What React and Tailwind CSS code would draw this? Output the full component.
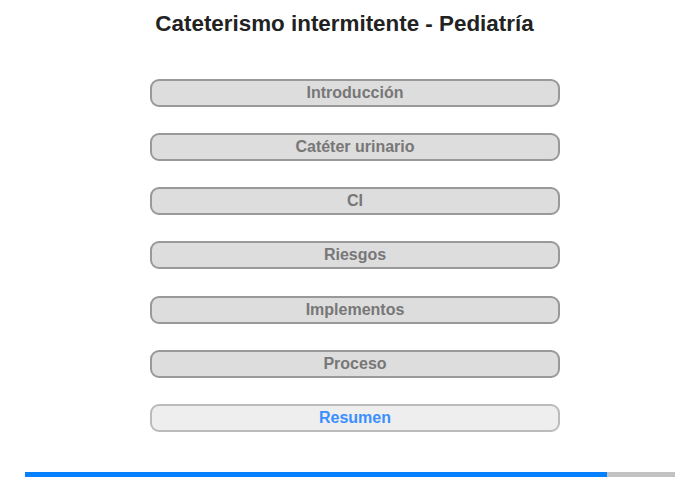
import React from 'react';

const items = ['Introducción', 'Catéter urinario', 'CI', 'Riesgos', 'Implementos', 'Proceso'];

const App = () => {
    const progress = 89.5;

    return (
        <div className="w-[700px] h-[480px] bg-white flex flex-col" style={{ fontFamily: '"Liberation Sans", Arial, sans-serif' }}>
            {/* Title */}
            <h1 className="pt-[11px] pr-[11px] text-center text-[22.4px] leading-[26px] font-bold text-[#222]">
                Cateterismo intermitente - Pediatría
            </h1>

            {/* Menu */}
            <div className="mt-[42px] flex flex-col items-center gap-[26.17px] pl-[10px]">
                {items.map((label) => (
                    <button
                        key={label}
                        className="w-[410px] h-[28px] rounded-[9px] border-2 border-[#999] bg-[#ddd] text-[16px] font-bold text-[#777] leading-none flex items-center justify-center"
                    >
                        {label}
                    </button>
                ))}
                <button className="w-[410px] h-[28px] rounded-[9px] border-2 border-[#bbb] bg-[#eee] text-[16px] font-bold text-[#3b8eff] leading-none flex items-center justify-center">
                    Resumen
                </button>
            </div>

            {/* Progress */}
            <div className="mt-auto mb-[3px] mx-[25px] h-[5px] bg-[#c2c2c2]">
                <div className="h-full bg-[#0780ff]" style={{ width: `${progress}%` }} />
            </div>
        </div>
    );
};

export default App;
